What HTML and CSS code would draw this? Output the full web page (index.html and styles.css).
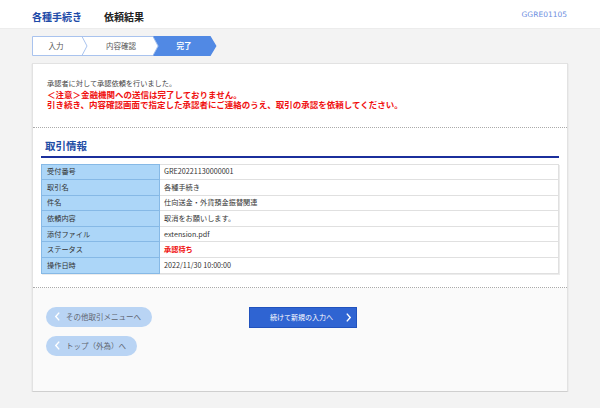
FILE: index.html
```html
<!DOCTYPE html>
<html lang="ja">
<head>
<meta charset="utf-8">
<title>依頼結果</title>
<link rel="stylesheet" href="styles.css">
</head>
<body>
<header class="topbar">
  <div class="titles"><span class="crumb">各種手続き</span><span class="page">依頼結果</span></div>
  <span class="screen-id">GGRE01105</span>
</header>
<nav class="steps">
  <svg width="186" height="20" viewBox="0 0 186 20">
    <polygon points="0.5,0.5 121,0.5 126,10 121,19.5 0.5,19.5" fill="#fff" stroke="#a9c3ee" stroke-width="1"/>
    <polyline points="50,0.5 55,10 50,19.5" fill="none" stroke="#a9c3ee" stroke-width="1"/>
    <polygon points="121,0 178.5,0 184.5,10 178.5,20 121,20 126.5,10" fill="#5189e4"/>
    <text x="24" y="13" class="step-t">入力</text>
    <text x="89" y="13" class="step-t">内容確認</text>
    <text x="152" y="13" class="step-t on">完了</text>
  </svg>
</nav>
<main class="card">
  <section class="msg">
    <p class="info">承認者に対して承認依頼を行いました。</p>
    <p class="warn">＜注意＞金融機関への送信は完了しておりません。</p>
    <p class="warn">引き続き、内容確認画面で指定した承認者にご連絡のうえ、取引の承認を依頼してください。</p>
  </section>
  <section class="detail">
    <h2>取引情報</h2>
    <table class="info-table">
      <tr><th>受付番号</th><td>GRE20221130000001</td></tr>
      <tr><th>取引名</th><td>各種手続き</td></tr>
      <tr><th>件名</th><td>仕向送金・外貨預金振替関連</td></tr>
      <tr><th>依頼内容</th><td>取消をお願いします。</td></tr>
      <tr><th>添付ファイル</th><td>extension.pdf</td></tr>
      <tr><th>ステータス</th><td class="status">承認待ち</td></tr>
      <tr><th>操作日時</th><td>2022/11/30 10:00:00</td></tr>
    </table>
  </section>
  <section class="actions">
    <div class="back">
      <button class="pill"><svg width="5" height="9" viewBox="0 0 5 9"><polyline points="4.2,0.6 0.8,4.5 4.2,8.4" fill="none" stroke="#fff" stroke-width="1.4"/></svg><span>その他取引メニューへ</span></button>
      <button class="pill"><svg width="5" height="9" viewBox="0 0 5 9"><polyline points="4.2,0.6 0.8,4.5 4.2,8.4" fill="none" stroke="#fff" stroke-width="1.4"/></svg><span>トップ（外為）へ</span></button>
    </div>
    <button class="primary"><span>続けて新規の入力へ</span><svg width="5" height="9" viewBox="0 0 5 9"><polyline points="0.8,0.6 4.2,4.5 0.8,8.4" fill="none" stroke="#fff" stroke-width="1.4"/></svg></button>
  </section>
</main>
</body>
</html>
```
FILE: styles.css
```css
* { box-sizing: border-box; }
body {
  margin: 0;
  background: #f3f3f3;
  font-family: "Noto Sans CJK JP", "Noto Sans", sans-serif;
  color: #333;
}
.topbar {
  height: 29px;
  background: #fff;
  display: flex;
  align-items: center;
  justify-content: space-between;
  padding: 0 33px 0 32px;
  border-bottom: 1px solid #ececec;
}
.crumb { color: #1d4aa8; font-weight: bold; font-size: 10px; margin-right: 22px; }
.page { color: #222; font-weight: bold; font-size: 10px; }
.screen-id { color: #6c8ee0; font-size: 7.5px; font-family: "DejaVu Sans", sans-serif; }
.steps { margin: 7px 0 0 32px; height: 20px; }
.steps svg { display: block; }
.step-t { font-size: 7.5px; fill: #555; text-anchor: middle; font-family: "Noto Sans CJK JP", sans-serif; }
.step-t.on { fill: #fff; font-weight: bold; }
.card {
  margin: 7px 32px 0;
  width: 536px;
  background: #fff;
  border: 1px solid #e2e2e2;
  border-bottom-color: #cfcfcf;
  box-shadow: 0 1px 1px #c8c8c8;
}
.msg {
  padding: 14px 14px 17px;
  border-bottom: 1px dotted #aaa;
}
.msg p { margin: 0; line-height: 10.5px; }
.info { font-size: 7.2px; color: #444; }
.warn { font-size: 8.5px; color: #f01010; font-weight: bold; }
.detail {
  padding: 11px 8px 13px;
  border-bottom: 1px dotted #aaa;
}
.detail h2 {
  margin: 0 0 6px;
  font-size: 10.5px;
  line-height: 14px;
  height: 19px;
  padding: 0 0 3px 4px;
  color: #1f4ea6;
  border-bottom: 2px solid #1b2f9c;
}
.info-table {
  width: 100%;
  border-collapse: collapse;
  font-size: 7.2px;
  box-shadow: 1px 1px 0 #ececec;
}
.info-table th, .info-table td {
  height: 15.6px;
  padding: 0 5px;
  text-align: left;
  font-weight: normal;
  white-space: nowrap;
  line-height: 1;
}
.info-table th {
  width: 118px;
  background: #acd6f8;
  color: #333;
  border: 1px solid #86b9e6;
}
.info-table td {
  color: #333;
  border: 1px solid #e0e0e0;
  padding-left: 4px;
}
.info-table td.status { color: #f01010; font-weight: bold; }
.actions {
  background: #fafafa;
  display: flex;
  align-items: flex-start;
  padding: 19px 0 35px 13px;
}
.back {
  width: 203px;
  display: flex;
  flex-direction: column;
  align-items: flex-start;
  gap: 9px;
}
button { font-family: inherit; cursor: pointer; }
.pill {
  height: 20px;
  border: none;
  border-radius: 10px;
  background: #b9d4f4;
  color: #5e6470;
  font-size: 7.5px;
  display: inline-flex;
  align-items: center;
  gap: 6px;
  padding: 0 11px 0 9px;
}
.pill svg, .primary svg { display: block; }
.primary {
  height: 21px;
  width: 108px;
  border: 1px solid #2152bd;
  background: #2f64d2;
  color: #fff;
  font-size: 7px;
  display: flex;
  align-items: center;
  gap: 13px;
  padding: 0 0 0 20px;
}
```
